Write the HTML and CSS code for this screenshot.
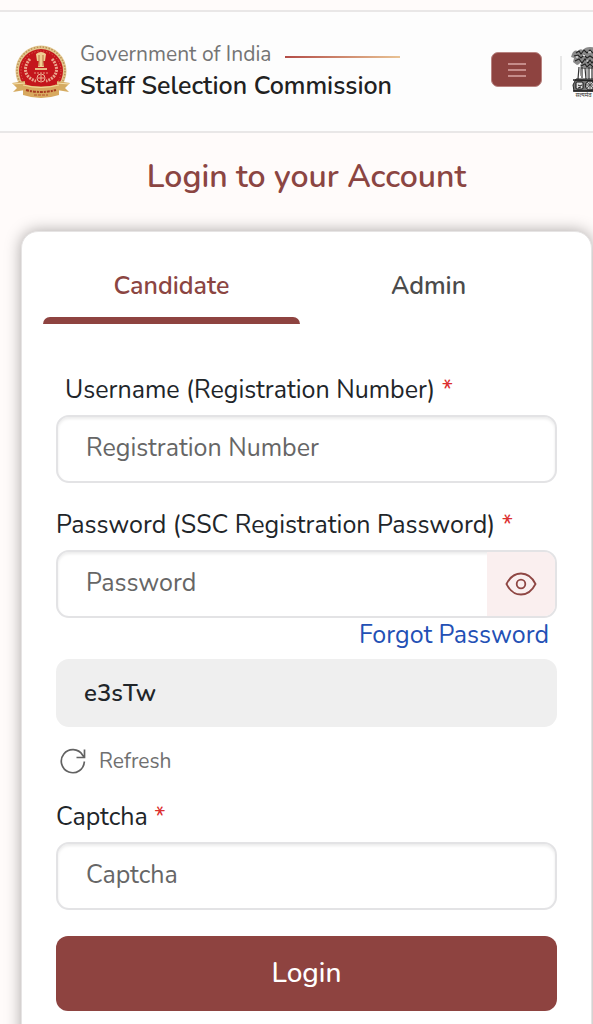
FILE: index.html
```html
<!DOCTYPE html>
<html lang="en">
<head>
<meta charset="utf-8">
<meta name="viewport" content="width=device-width, initial-scale=1">
<title>Staff Selection Commission - Login</title>
<link rel="stylesheet" href="styles.css">
</head>
<body>
<header class="site-header">
  <svg class="seal" viewBox="0 0 60 54" role="img" aria-label="Staff Selection Commission seal">
    <circle cx="30" cy="26" r="25.5" fill="#e3c78e"/>
    <circle cx="30" cy="26" r="24" fill="none" stroke="#b99157" stroke-width="1.5" stroke-dasharray="1.5 1.5"/>
    <circle cx="30" cy="26" r="22" fill="#c4161c"/>
    <circle cx="30" cy="26" r="20" fill="none" stroke="#dd7060" stroke-width="1" stroke-dasharray="1 2"/>
    <path d="M19 14c-8 9-5 19 6 22M41 14c8 9 5 19-6 22" fill="none" stroke="#eba58c" stroke-width="3" stroke-dasharray="2 1"/>
    <path d="M25 9q5-4 10 0l-1 7h-2l1 6h-6l1-6h-2z" fill="#f0cf93"/>
    <path d="M24 23h12v2H24z" fill="#e8b883"/>
    <path d="M28 10v11M32 10v11" stroke="#b97341" stroke-width="1"/>
    <path d="M23 28h14" stroke="#e99a80" stroke-width="1" stroke-dasharray="2 1"/>
    <circle cx="30" cy="33" r="4" fill="#c4161c" stroke="#eeb696" stroke-width="1"/>
    <path d="M27 33h6M30 30v6" stroke="#eeb696" stroke-width="1"/>
    <path d="M1 38l13-2v9l-12 2 4-4zM59 38l-13-2v9l12 2-4-4z" fill="#d5ab61"/>
    <path d="M2 39l12-1M58 39l-12-1" stroke="#f5dfab" stroke-width="1"/>
    <path d="M12 39q18 5 36 0v11q-18 6-36 0z" fill="#d8a95f"/>
    <path d="M12 40q18 5 36 0" fill="none" stroke="#f1d799" stroke-width="1"/>
    <path d="M15 45q15 4 30 0" fill="none" stroke="#a83b20" stroke-width="2" stroke-dasharray="3 1 2 1"/>
    <path d="M23 50h14" stroke="#b5502c" stroke-width="1" stroke-dasharray="3 1"/>
  </svg>
  <div class="brand">
    <div class="brand-top"><span class="gov">Government of India</span><span class="brand-line"></span></div>
    <div class="brand-name">Staff Selection Commission</div>
  </div>
  <button class="menu" type="button" aria-label="Menu">
    <svg viewBox="0 0 18 14" width="18" height="14"><path d="M0 1h18M0 7h18M0 13h18" stroke="#d9a5a2" stroke-width="1.6"/></svg>
  </button>
  <span class="divider"></span>
  <svg class="emblem" viewBox="0 0 38 52" role="img" aria-label="National emblem of India">
    <path d="M7 4q-4-2-6 3l-1 3 3 1-1 4 4 3 3-1 1 5h18l1-5 3 1 4-3-1-4 3-1-1-3q-2-5-6-3-2-3-5-1-2-3-7-3t-7 3q-3-2-5 1z" fill="#8a8a8a"/>
    <path d="M5 6l3-2 2 3 3-4 3 3 3-3 3 3 3-3 3 4 2-3 3 2M3 9l4-1 3 3 3-3 3 3 3-2 3 2 3-3 3 3 3-3 4 1M4 14l4-2 3 4 3-4 3 4 2-3 2 3 3-4 3 4 3-4 4 2M10 19l4-2 2 3 3-3 3 3 2-3 4 2" fill="none" stroke="#222" stroke-width="1.1"/>
    <path d="M12 8l2 1M24 8l2 1M5 10l2 0M17 5h3M15 14h2M22 14h2M8 18l2-2" stroke="#fff" stroke-width="1.2"/>
    <path d="M8 20l-1 12M11 20v11M14 21l1 11M18 20v12M21 20v12M25 21l-1 11M28 20v11M31 20l1 12" fill="none" stroke="#333" stroke-width="1.2"/>
    <path d="M9 20l1 9M30 20l-1 9M16 22v9" stroke="#999" stroke-width="1.5"/>
    <path d="M5 32h29l3 6-1 6H3l-1-6z" fill="#777" stroke="#222" stroke-width="1"/>
    <path d="M2 33l34 1M2 44h34" stroke="#222" stroke-width="1.4"/>
    <rect x="5" y="35" width="7" height="7" rx="1" fill="#ddd" stroke="#111"/>
    <path d="M7 38l2 1 2-1M7 41l3-1" stroke="#222" fill="none"/>
    <circle cx="19" cy="38.500" r="4.500" fill="#ccc" stroke="#111"/>
    <path d="M15 38h8M19 34v9M16 35l6 6M22 35l-6 6" stroke="#444" stroke-width=".8"/>
    <rect x="26" y="35" width="7" height="7" rx="1" fill="#ddd" stroke="#111"/>
    <text x="19" y="50" text-anchor="middle" class="motto">सत्यमेव जयते</text>
  </svg>
</header>
<main class="page">
  <h1 class="title">Login to your Account</h1>
  <section class="card">
    <div class="tabs" role="tablist">
      <button class="tab tab-active" type="button" role="tab" aria-selected="true">Candidate</button>
      <button class="tab" type="button" role="tab" aria-selected="false">Admin</button>
    </div>
    <form class="form">
      <label class="label label-indent" for="username">Username (Registration Number) <span class="req">*</span></label>
      <input class="field" id="username" type="text" placeholder="Registration Number">
      <label class="label label-next" for="password">Password (SSC Registration Password) <span class="req">*</span></label>
      <div class="field password">
        <input class="password-input" id="password" type="password" placeholder="Password">
        <button class="eye" type="button" aria-label="Show password">
          <svg viewBox="0 0 32 24" width="32" height="24" fill="none" stroke="#8e4643" stroke-width="1.8"><path d="M1.500 12C4 7 9 1.500 16 1.500S28 7 30.500 12C28 17 23 22.500 16 22.500S4 17 1.500 12z"/><circle cx="16" cy="12" r="4.300"/></svg>
        </button>
      </div>
      <a class="forgot" href="#">Forgot Password</a>
      <div class="code">e3sTw</div>
      <button class="refresh" type="button">
        <svg viewBox="0 0 28 28" width="28" height="28" fill="none" stroke="#626262" stroke-width="1.700"><path d="M25.300 14.500A11.500 11.500 0 1 1 23.500 8L25.500 10.500M25.500 2.500v8H17.500"/></svg>
        <span>Refresh</span>
      </button>
      <label class="label" for="captcha">Captcha <span class="req">*</span></label>
      <input class="field" id="captcha" type="text" placeholder="Captcha">
      <button class="login" type="submit">Login</button>
    </form>
  </section>
</main>
</body>
</html>
```
FILE: styles.css
```css
* { box-sizing: border-box; }
body {
  margin: 0;
  padding-top: 10px;
  background: #fffbfa;
  color: #212529;
  font-family: Nunito, "Noto Sans", sans-serif;
  font-size: 25px;
  overflow-x: hidden;
}
button, input { font: inherit; color: inherit; }
button { border: 0; padding: 0; background: none; cursor: pointer; }

.site-header {
  display: flex;
  align-items: center;
  height: 123px;
  padding: 0 0 4px 11px;
  background: #fdfdfd;
  border-top: 2px solid #e9e7e7;
  border-bottom: 2px solid #e9e7e7;
  overflow: hidden;
}
.seal { width: 60px; height: 54px; margin-top: 4px; flex: none; }
.brand { margin-left: 9px; flex: none; }
.brand-top { display: flex; align-items: center; gap: 14px; line-height: 32px; }
.gov { font-size: 21px; color: #747474; }
.brand-line { width: 115px; height: 2px; margin-top: 6px; background: linear-gradient(90deg, #b34c47, #e9c394); }
.brand-name { line-height: 32px; font-weight: 600; color: #212121; }
.menu {
  display: grid;
  place-items: center;
  width: 51px;
  height: 35px;
  margin-left: auto;
  flex: none;
  border: 1px solid #b8827f;
  border-radius: 7px;
  background: #8e4340;
}
.divider { width: 2px; height: 34px; margin: 6px 9px 0 18px; flex: none; background: #e8e8e8; }
.emblem { width: 38px; height: 52px; margin: 6px -16px 0 0; flex: none; }
.motto { font-size: 6px; fill: #333; }

.page { padding: 26px 1px 0 21px; }
.title { margin: 0; font-size: 32px; line-height: 36px; font-weight: 600; text-align: center; color: #8b4542; }
.card {
  margin-top: 36px;
  padding: 20px 34px 60px;
  background: #fff;
  border: 1px solid #e6e4e4;
  border-radius: 17px;
  box-shadow: 0 0 16px rgba(0, 0, 0, .34);
}
.tabs { display: grid; grid-template-columns: 1fr 1fr; margin-left: -13px; }
.tab { height: 72px; padding-bottom: 4px; line-height: 32px; font-weight: 600; color: #4b4b4b; position: relative; }
.tab-active { color: #8b4542; }
.tab-active::after {
  content: "";
  position: absolute;
  inset: auto 0 0;
  height: 7px;
  border-radius: 7px 7px 0 0;
  background: #8e4340;
}
.form { display: flex; flex-direction: column; padding-top: 49px; }
.label { line-height: 34px; margin-bottom: 8px; white-space: nowrap; }
.label-indent { padding-left: 9px; }
.label-next { margin-top: 25px; }
.req { color: #dc3030; }
.field {
  width: 100%;
  height: 68px;
  padding: 0 28px 2px;
  border: 2px solid #e3e3e5;
  border-radius: 13px;
  background: #fff;
  box-shadow: inset 0 2px 3px rgba(0, 0, 0, .08);
  outline: 0;
}
input::placeholder { color: #666; opacity: 1; }
.password { display: flex; padding: 0; overflow: hidden; }
.password-input { flex: 1; min-width: 0; padding: 0 28px 2px; border: 0; background: none; outline: 0; }
.eye { display: grid; place-items: center; width: 68px; background: #faefef; }
.forgot { align-self: flex-end; margin-right: 8px; line-height: 34px; color: #2350b5; text-decoration: none; }
.code {
  height: 68px;
  margin-top: 7px;
  padding: 0 28px;
  border-radius: 13px;
  background: #efefef;
  font-size: 24px;
  line-height: 68px;
  font-weight: 600;
}
.refresh { display: flex; align-items: center; align-self: flex-start; gap: 12px; height: 34px; margin: 17px 0 22px 3px; font-size: 21px; color: #707070; }
.login { height: 75px; margin-top: 26px; padding-bottom: 2px; border-radius: 12px; background: #8e4340; color: #fff; font-size: 28px; font-weight: 500; }
```
